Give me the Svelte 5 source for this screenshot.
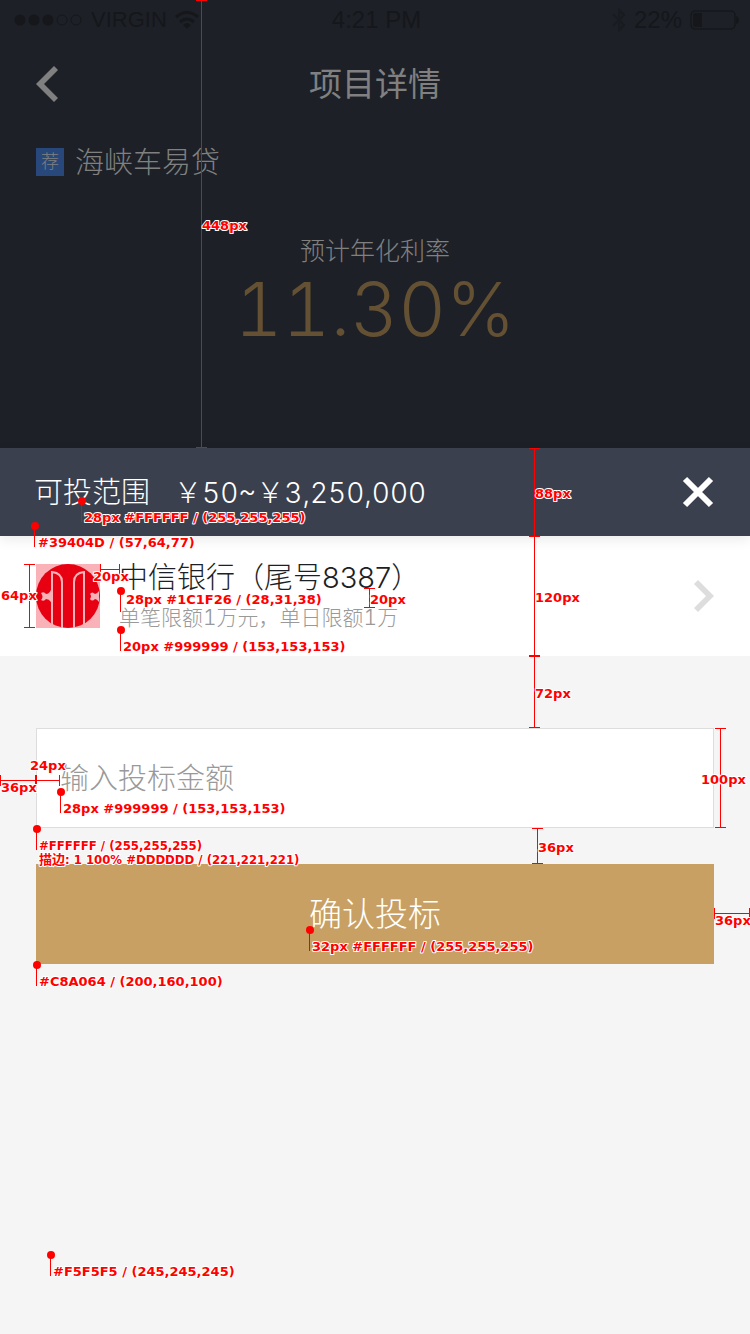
<script>
  let amount = $state('');

  // Design notes: measured distances and sampled colours
  const rulers = [
    'M196 .5H207M201.5 0V447M196 447.5H207',
    'M529 448.5H540M534.5 448V727M529 536.5H540M529 655.5H540M529 656.5H540M529 727.5H540',
    'M24 564.5H35M29.5 564V627M24 627.5H35',
    'M100.5 564V575M100 569.5H119M119.5 564V575',
    'M364 588.5H375M369.5 588V607M364 607.5H375',
    'M.5 775V786M0 780.5H60M36.5 775V786M35.5 775V786M59.5 775V786',
    'M715 728.5H726M720.5 728V827M715 827.5H726',
    'M532 828.5H543M537.5 828V863M532 863.5H543',
    'M714.5 908V919M714 913.5H750M749.5 908V919'
  ];

  const sizes = [
    [202, 230, '448px'],
    [535, 498, '88px'],
    [535, 602, '120px'],
    [535, 698, '72px'],
    [1, 600, '64px'],
    [93, 581, '20px'],
    [370, 604, '20px'],
    [30, 770, '24px'],
    [1, 792, '36px'],
    [701, 784, '100px'],
    [538, 852, '36px'],
    [715, 925, '36px']
  ];

  const pins = [
    [82, 501, 84, 522, '28px #FFFFFF / (255,255,255)'],
    [35, 526, 38, 547, '#39404D / (57,64,77)'],
    [121, 591, 126, 604, '28px #1C1F26 / (28,31,38)'],
    [121, 630, 123, 651, '20px #999999 / (153,153,153)'],
    [61, 792, 63, 813, '28px #999999 / (153,153,153)'],
    [310, 930, 312, 951, '32px #FFFFFF / (255,255,255)'],
    [37, 965, 39, 986, '#C8A064 / (200,160,100)'],
    [51, 1255, 53, 1276, '#F5F5F5 / (245,245,245)']
  ];
</script>

<main class="screen">
  <section class="project">
    <div class="status">
      <div class="carrier">
        <svg width="70" height="14" viewBox="0 0 70 14" aria-hidden="true">
          <g fill="#15171b"><circle cx="7" cy="7" r="5.5" /><circle cx="21" cy="7" r="5.5" /><circle cx="35" cy="7" r="5.5" /></g>
          <g fill="none" stroke="#15171b"><circle cx="49" cy="7" r="5" /><circle cx="63" cy="7" r="5" /></g>
        </svg>
        <span>VIRGIN</span>
        <svg width="24" height="18" viewBox="0 0 24 18" aria-hidden="true">
          <g fill="none" stroke="#15171b" stroke-width="3"><path d="M1 6Q12-3 23 6" /><path d="M5 11Q12 5 19 11" /></g>
          <path d="M8 14Q12 10 16 14L12 18Z" fill="#15171b" />
        </svg>
      </div>
      <span class="time">4:21 PM</span>
      <div class="power">
        <svg width="14" height="24" viewBox="0 0 14 24" aria-hidden="true">
          <path d="M1 6L12 17L7 22V2L12 7L1 18" fill="none" stroke="#181b20" stroke-width="2" />
        </svg>
        <span>22%</span>
        <svg width="50" height="20" viewBox="0 0 50 20" aria-hidden="true">
          <rect x="1" y="1" width="44" height="18" rx="4" fill="none" stroke="#15171b" stroke-width="1.5" />
          <path d="M3 5Q3 3 5 3H12V17H5Q3 17 3 15ZM46 6Q49 7 49 10Q49 13 46 14Z" fill="#15171b" />
        </svg>
      </div>
    </div>

    <header class="nav">
      <button class="icon" aria-label="返回">
        <svg width="22" height="36" viewBox="0 0 22 36"><path d="M18 0L22 4L8 18L22 32L18 36L0 18Z" fill="#808080" /></svg>
      </button>
      <h1>项目详情</h1>
    </header>

    <div class="name"><span class="tag">荐</span><h2>海峡车易贷</h2></div>

    <div class="rate">
      <span class="rate-label">预计年化利率</span>
      <strong>11.30%</strong>
    </div>
  </section>

  <section class="sheet">
    <div class="range">
      <p><span>可投范围</span><span class="amounts">￥50~￥3,250,000</span></p>
      <button class="icon" aria-label="关闭">
        <svg width="32" height="32" viewBox="0 0 32 32"><path d="M3 3L29 29M29 3L3 29" stroke="#fff" stroke-width="6" /></svg>
      </button>
    </div>

    <button class="bank">
      <svg class="logo" width="64" height="64" viewBox="0 0 64 64" aria-hidden="true">
        <rect width="64" height="64" fill="#f8b2b8" />
        <circle cx="32" cy="32" r="32" fill="#e60012" />
        <g fill="none" stroke="#f8b2b8" stroke-width="2">
          <path d="M16 61V8Q26 9 26 18V64" />
          <path d="M48 61V8Q38 9 38 18V64" />
        </g>
        <g fill="#f8b2b8">
          <path d="M5 29Q8 27 10 30Q13 30 15 26V38Q13 35 10 35Q8 38 5 36Q8 33 5 29Z" />
          <path d="M54 30Q56 27 59 30Q61 30 63 27V38Q61 35 59 35Q56 38 54 35Q56 32 54 30Z" />
        </g>
      </svg>
      <span class="bank-text">
        <span class="bank-name">中信银行（尾号8387）</span>
        <span class="limit">单笔限额1万元，单日限额1万</span>
      </span>
      <svg width="20" height="32" viewBox="0 0 20 32" aria-hidden="true"><path d="M0 4L4 0L20 16L4 32L0 28L12 16Z" fill="#ddd" /></svg>
    </button>

    <form class="bid" onsubmit={(e) => e.preventDefault()}>
      <input bind:value={amount} inputmode="decimal" placeholder="输入投标金额" aria-label="输入投标金额" />
      <button class="confirm">确认投标</button>
    </form>
  </section>

  <svg class="notes" width="750" height="1334" viewBox="0 0 750 1334">
    {#each rulers as d}<path {d} />{/each}
    {#each pins as [x, y]}
      <path d="M{x - 0.5} {y}V{y + 21}" />
      <circle cx={x} cy={y} r="4" />
    {/each}
    {#each sizes as [x, y, label]}<text {x} {y}>{label}</text>{/each}
    {#each pins as [, , x, y, label]}<text {x} {y}>{label}</text>{/each}
    <path d="M36.5 829V850" /><circle cx="37" cy="829" r="4" />
    <text class="narrow" x="39" y="850">#FFFFFF / (255,255,255)</text>
    <text class="narrow" x="39" y="864">描边: 1 100% #DDDDDD / (221,221,221)</text>
  </svg>
</main>

<style>
  :global(body) {
    margin: 0;
    background: #f5f5f5;
  }
  .screen {
    position: relative;
    min-height: 100vh;
    overflow: hidden;
    font-family: Inter, 'Noto Sans CJK SC', sans-serif;
    font-weight: 300;
  }
  h1, h2, p {
    margin: 0;
    font-weight: inherit;
  }
  button {
    border: 0;
    padding: 0;
    background: none;
    font: inherit;
    color: inherit;
  }
  svg {
    display: block;
    flex: none;
  }
  .icon {
    display: flex;
  }
  .project {
    box-sizing: border-box;
    height: 448px;
    background: #1d2027;
    color: #808080;
  }
  .status {
    display: grid;
    grid-template-columns: 1fr auto 1fr;
    align-items: center;
    height: 40px;
    padding: 0 10px 0 13px;
    color: #15171b;
    font: 24px 'Liberation Sans', sans-serif;
  }
  .carrier, .power {
    display: flex;
    align-items: center;
    gap: 8px;
  }
  .carrier {
    font-size: 22px;
  }
  .power {
    justify-content: flex-end;
  }
  .nav {
    display: grid;
    grid-template-columns: 1fr auto 1fr;
    align-items: center;
    height: 88px;
    padding: 0 36px;
  }
  h1 {
    font-size: 33px;
    font-weight: 400;
    line-height: 48px;
  }
  .name {
    display: flex;
    align-items: center;
    gap: 11px;
    height: 68px;
    padding: 0 36px;
  }
  .tag {
    width: 28px;
    height: 28px;
    background: #28487c;
    font-size: 18px;
    line-height: 28px;
    text-align: center;
  }
  h2 {
    font-size: 29px;
    line-height: 40px;
    padding-top: 2px;
  }
  .rate {
    display: flex;
    flex-direction: column;
    align-items: center;
    padding-top: 37px;
  }
  .rate-label {
    font-size: 25px;
    line-height: 36px;
  }
  .rate strong {
    color: #645032;
    font-size: 74px;
    font-variant-numeric: tabular-nums;
    font-weight: 300;
    line-height: 80px;
  }
  .range {
    position: relative;
    display: flex;
    align-items: center;
    justify-content: space-between;
    height: 88px;
    padding: 0 36px 0 34px;
    background: #3a404d;
    box-shadow: 0 4px 12px rgba(0, 0, 0, 0.08);
    color: #fff;
    font-size: 29px;
  }
  .range p {
    display: flex;
    align-items: baseline;
    gap: 24px;
    padding-bottom: 4px;
  }
  .amounts {
    font-size: 28px;
    font-variant-numeric: tabular-nums;
  }
  .bank {
    display: flex;
    align-items: center;
    width: 100%;
    height: 120px;
    padding: 0 36px;
    background: #fff;
    text-align: left;
  }
  .bank-text {
    display: flex;
    flex: 1;
    flex-direction: column;
    padding-left: 19px;
  }
  .bank-name {
    color: #1c1f26;
    font-size: 29px;
    line-height: 44px;
  }
  .limit {
    color: #999;
    font-size: 21px;
    font-variant-numeric: tabular-nums;
    line-height: 36px;
  }
  .bid {
    display: flex;
    flex-direction: column;
    gap: 36px;
    padding: 72px 36px;
  }
  input {
    box-sizing: border-box;
    width: 100%;
    height: 100px;
    border: 1px solid #ddd;
    border-radius: 0;
    padding: 0 23px;
    background: #fff;
    color: #1c1f26;
    font: inherit;
    font-size: 29px;
  }
  input::placeholder {
    color: #999;
    opacity: 1;
  }
  .confirm {
    height: 100px;
    padding-bottom: 4px;
    background: #c8a064;
    color: #fff;
    font-size: 33px;
  }
  .notes {
    position: absolute;
    top: 0;
    left: 0;
    pointer-events: none;
  }
  .notes path {
    fill: none;
    stroke: #f00;
  }
  .notes circle {
    fill: #f00;
  }
  .notes text {
    fill: #f00;
    stroke: #fff;
    stroke-width: 2px;
    stroke-linejoin: round;
    paint-order: stroke;
    font: bold 13px 'DejaVu Sans', 'Noto Sans CJK SC', sans-serif;
  }
  .notes .narrow {
    font-family: 'DejaVu Sans Condensed', 'Noto Sans CJK SC', sans-serif;
  }
</style>
